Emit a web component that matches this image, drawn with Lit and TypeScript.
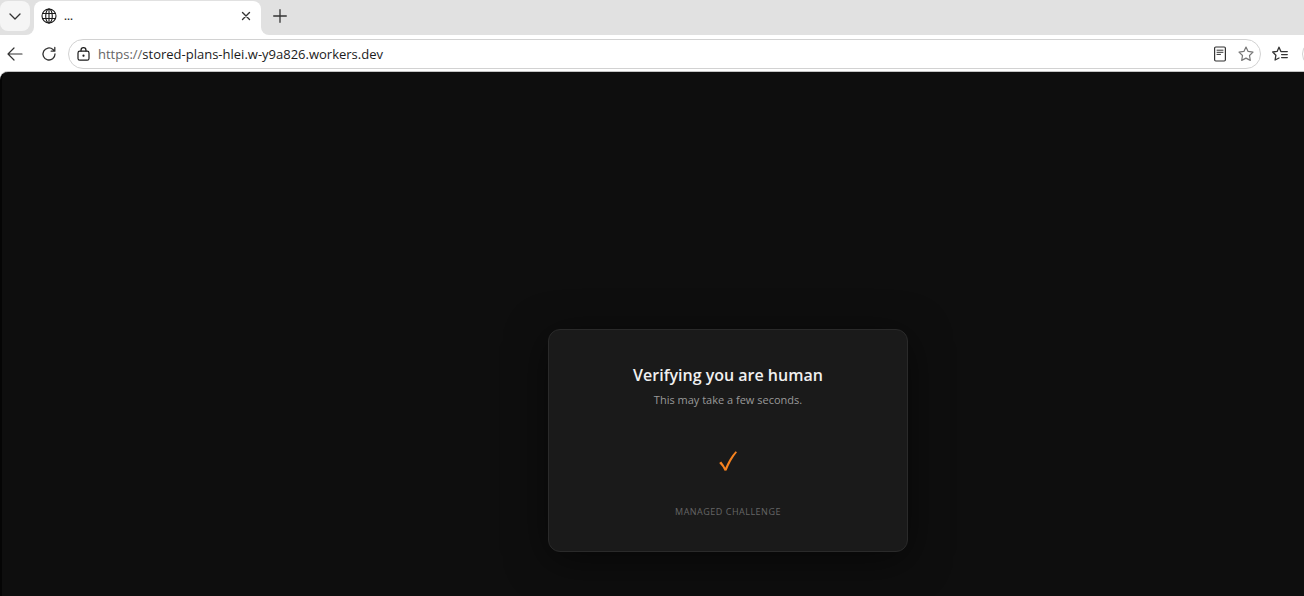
import { LitElement, html, css } from "lit";
import { customElement, state } from "lit/decorators.js";

@customElement("challenge-card")
class ChallengeCard extends LitElement {
  static styles = css`
    :host {
      display: block;
      width: 360px;
      box-sizing: border-box;
      padding: 35px 32px 31px;
      border: 1px solid #2a2a2a;
      border-radius: 12px;
      background: #1a1a1a;
      box-shadow: 0 8px 40px rgba(0, 0, 0, 0.5);
      text-align: center;
    }
    .title {
      margin: 0;
      font-size: 16px;
      line-height: 20px;
      font-weight: 600;
      color: #f0f0f0;
    }
    .subtitle {
      margin: 5px 0 0;
      font-size: 11px;
      line-height: 20px;
      color: #999;
    }
    .check {
      display: block;
      width: 24px;
      height: 24px;
      margin: 39px auto 31px;
    }
    .footer {
      margin: 0;
      font-size: 9px;
      line-height: 16px;
      letter-spacing: 0.5px;
      text-transform: uppercase;
      color: #666;
    }
  `;

  render() {
    return html`
      <h1 class="title">Verifying you are human</h1>
      <p class="subtitle">This may take a few seconds.</p>
      <svg class="check" viewBox="0 0 24 24" role="img" aria-label="Done">
        <path d="M3.2 14.1 L5.2 12.6 Q7.6 15.6 9.3 18.8 Q13.6 8.6 19.6 2.2 L21 3.2 Q14.6 11 10.6 21.6 L8.6 21.8 Q6.6 17.4 3.2 14.1 Z" fill="#f6821f" />
      </svg>
      <p class="footer">Managed Challenge</p>
    `;
  }
}

@customElement("app-root")
class AppRoot extends LitElement {
  @state() private host = "stored-plans-hlei.w-y9a826.workers.dev";

  static styles = css`
    :host {
      display: flex;
      flex-direction: column;
      min-height: 100vh;
      overflow: hidden;
      background: #fff;
      font-family: "Segoe UI", "Open Sans", "Noto Sans", sans-serif;
      color: #1b1b1b;
    }
    button {
      display: grid;
      place-items: center;
      flex: none;
      padding: 0;
      border: 0;
      background: none;
      color: #333;
    }
    svg {
      display: block;
      fill: none;
      stroke: currentColor;
      stroke-linecap: round;
      stroke-linejoin: round;
    }
    .tabs {
      display: flex;
      height: 35px;
      background: #e1e1e1;
    }
    .corner {
      display: flex;
      background: #fff;
    }
    .lead {
      flex: none;
      width: 34px;
      box-sizing: border-box;
      padding-top: 1px;
      background: #e1e1e1;
      border-bottom-right-radius: 8px;
    }
    .menu {
      width: 30px;
      height: 30px;
      border-radius: 8px;
      background: #f5f5f5;
    }
    .tab-slot {
      display: flex;
      background: #e1e1e1;
    }
    .tab {
      display: flex;
      align-items: center;
      box-sizing: border-box;
      width: 227px;
      margin-top: 1px;
      padding: 0 5px 4px 7px;
      border-radius: 8px 8px 0 0;
      background: #fff;
    }
    .tab-title {
      flex: 1;
      margin-left: 7px;
      font-size: 11px;
      line-height: 16px;
      font-weight: 600;
    }
    .close,
    .tool {
      width: 20px;
      height: 20px;
    }
    .rest {
      flex: 1;
      padding: 6px 9px;
      background: #e1e1e1;
      border-bottom-left-radius: 8px;
    }
    .wide {
      flex: 1;
    }
    .bar {
      display: flex;
      align-items: center;
      gap: 12px;
      height: 37px;
      padding: 0 0 0 5px;
    }
    .reload {
      margin-left: 2px;
    }
    .address {
      flex: 1;
      display: flex;
      align-items: center;
      box-sizing: border-box;
      height: 30px;
      margin-left: -3px;
      padding: 0 4px 0 8px;
      border: 1px solid #d2d2d2;
      border-radius: 15px;
      background: #fff;
    }
    .scheme,
    .url {
      font-size: 13px;
      line-height: 20px;
    }
    .scheme {
      margin-left: 8px;
      color: #666;
    }
    .url {
      flex: 1;
      min-width: 0;
      padding: 0;
      border: 0;
      outline: 0;
      background: none;
      font-family: inherit;
      color: #1b1b1b;
    }
    .page-tools {
      display: flex;
      gap: 6px;
    }
    .star {
      color: #777;
    }
    .favorites {
      margin-left: -3px;
    }
    .profile {
      width: 28px;
      height: 28px;
      margin-right: -26px;
      border: 1px solid #d2d2d2;
      border-radius: 50%;
    }
    .view {
      flex: 1;
      border-left: 2px solid #050505;
      border-top-left-radius: 8px;
      background: #0e0e0e;
      box-shadow: 0 -1px 0 #c4c4c4;
      overflow: hidden;
    }
    .content {
      display: flex;
      justify-content: center;
      width: calc(100% + 150px);
      padding: 257px 0 44px;
      box-sizing: border-box;
    }
  `;

  render() {
    return html`
      <header>
        <div class="tabs">
          <div class="corner">
            <div class="lead">
              <button class="menu" aria-label="Tab actions">
                <svg width="14" height="14" viewBox="0 0 14 14" stroke-width="1.3"><path d="M2 5l5 5 5-5" /></svg>
              </button>
            </div>
          </div>
          <div class="tab-slot">
            <div class="tab">
              <svg width="16" height="16" viewBox="0 0 16 16" stroke="#555" stroke-width="1.1">
                <circle cx="8" cy="8" r="7" /><ellipse cx="8" cy="8" rx="3.3" ry="7" /><path d="M8 1v14M1.6 5.5h12.8M1.6 10.5h12.8" />
              </svg>
              <span class="tab-title">...</span>
              <button class="close" aria-label="Close tab">
                <svg width="10" height="10" viewBox="0 0 10 10" stroke-width="1.4"><path d="M1.5 1.5l7 7M8.5 1.5l-7 7" /></svg>
              </button>
            </div>
          </div>
          <div class="corner wide">
            <div class="rest">
              <button class="tool" aria-label="New tab">
                <svg width="14" height="14" viewBox="0 0 14 14" stroke="#555" stroke-width="1.3"><path d="M7 0.7v12.6M0.7 7h12.6" /></svg>
              </button>
            </div>
          </div>
        </div>
        <nav class="bar">
          <button class="tool" aria-label="Back">
            <svg width="16" height="16" viewBox="0 0 16 16" stroke-width="1.2"><path d="M15 8H1.3M7 2L1 8l6 6" /></svg>
          </button>
          <button class="tool reload" aria-label="Refresh">
            <svg width="16" height="16" viewBox="0 0 16 16" stroke-width="1.3"><path d="M14 8a6 6 0 1 1-2-4.5L13.6 5M13.8 1.5V5.2H10.2" /></svg>
          </button>
          <div class="address">
            <svg width="13" height="14" viewBox="0 0 13 14" stroke="#555" stroke-width="1.2">
              <rect x="1" y="4.2" width="11" height="9" rx="1.8" /><path d="M4 4V3.2a2.5 2.5 0 0 1 5 0V4" /><circle cx="6.5" cy="8.7" r=".5" fill="#555" />
            </svg>
            <label class="scheme" for="address">https://</label>
            <input class="url" id="address" type="text" spellcheck="false" .value=${this.host} />
            <div class="page-tools">
              <button class="tool" aria-label="Reading view">
                <svg width="14" height="16" viewBox="0 0 14 16" stroke-width="1.2"><rect x="1.6" y="1" width="10.8" height="14" rx="1.2" /><path d="M4 4.2h6M4 6.3h6M4 8.4h3.5" stroke-width="1" /></svg>
              </button>
              <button class="tool star" aria-label="Add to favorites">
                <svg width="16" height="16" viewBox="0 0 16 16" stroke-width="1.2"><path d="M8 1l2.1 4.4 4.9.7-3.5 3.4.8 4.9L8 12.1l-4.3 2.3.8-4.9L1 6.1l4.9-.7z" /></svg>
              </button>
            </div>
          </div>
          <button class="tool favorites" aria-label="Favorites">
            <svg width="16" height="16" viewBox="0 0 16 16" stroke-width="1.3"><path d="M9 5.4h-.1L7 1.2 5.1 5.4l-4.4.6 3.2 3.2-.8 4.8L7 12M9 5.6h6.3M9.6 8.6h5.7M9.6 11.6h5.7" /></svg>
          </button>
          <button class="profile" aria-label="Profile"></button>
        </nav>
      </header>
      <main class="view">
        <div class="content"><challenge-card></challenge-card></div>
      </main>
    `;
  }
}
